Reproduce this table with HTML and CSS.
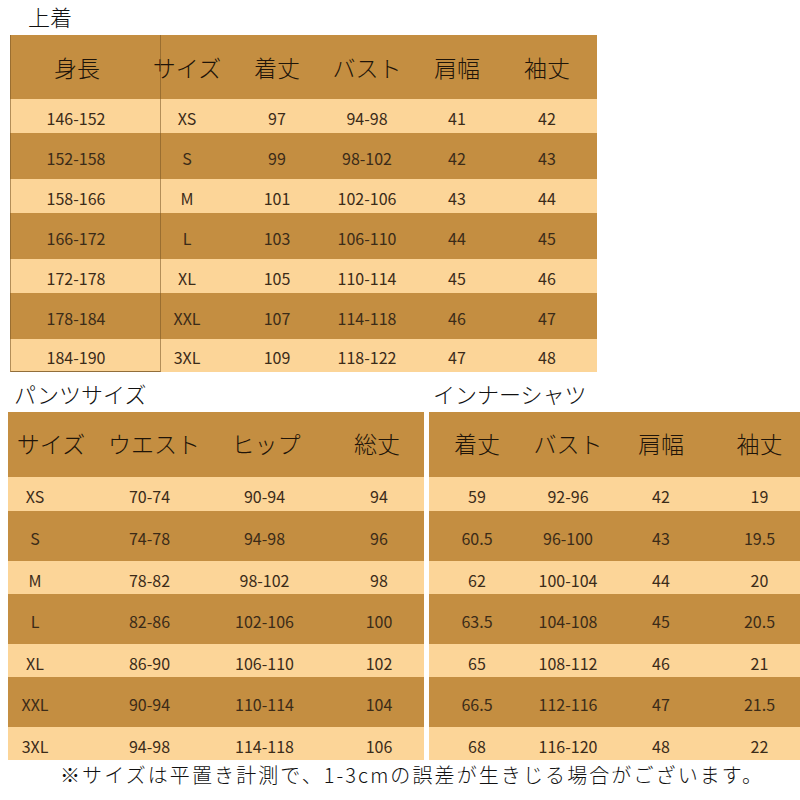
FILE: index.html
```html
<!DOCTYPE html>
<html lang="ja">
<head>
<meta charset="utf-8">
<link rel="stylesheet" href="styles.css">
</head>
<body>
<div class="page">
  <div class="title title-top">上着</div>
  <div class="tbl tbl-top">
    <div class="row head"><div class="c">身長</div><div class="c">サイズ</div><div class="c">着丈</div><div class="c">バスト</div><div class="c">肩幅</div><div class="c">袖丈</div></div>
    <div class="row l"><div class="c">146-152</div><div class="c">XS</div><div class="c">97</div><div class="c">94-98</div><div class="c">41</div><div class="c">42</div></div>
    <div class="row d"><div class="c">152-158</div><div class="c">S</div><div class="c">99</div><div class="c">98-102</div><div class="c">42</div><div class="c">43</div></div>
    <div class="row l"><div class="c">158-166</div><div class="c">M</div><div class="c">101</div><div class="c">102-106</div><div class="c">43</div><div class="c">44</div></div>
    <div class="row d"><div class="c">166-172</div><div class="c">L</div><div class="c">103</div><div class="c">106-110</div><div class="c">44</div><div class="c">45</div></div>
    <div class="row l"><div class="c">172-178</div><div class="c">XL</div><div class="c">105</div><div class="c">110-114</div><div class="c">45</div><div class="c">46</div></div>
    <div class="row d"><div class="c">178-184</div><div class="c">XXL</div><div class="c">107</div><div class="c">114-118</div><div class="c">46</div><div class="c">47</div></div>
    <div class="row l last"><div class="c">184-190</div><div class="c">3XL</div><div class="c">109</div><div class="c">118-122</div><div class="c">47</div><div class="c">48</div></div>
  </div>
  <div class="subtitles">
    <div class="title title-pants">パンツサイズ</div>
    <div class="title title-inner">インナーシャツ</div>
  </div>
  <div class="bottom">
    <div class="tbl tbl-pants">
      <div class="row head"><div class="c">サイズ</div><div class="c">ウエスト</div><div class="c">ヒップ</div><div class="c">総丈</div></div>
      <div class="row l"><div class="c">XS</div><div class="c">70-74</div><div class="c">90-94</div><div class="c">94</div></div>
      <div class="row d"><div class="c">S</div><div class="c">74-78</div><div class="c">94-98</div><div class="c">96</div></div>
      <div class="row l"><div class="c">M</div><div class="c">78-82</div><div class="c">98-102</div><div class="c">98</div></div>
      <div class="row d"><div class="c">L</div><div class="c">82-86</div><div class="c">102-106</div><div class="c">100</div></div>
      <div class="row l"><div class="c">XL</div><div class="c">86-90</div><div class="c">106-110</div><div class="c">102</div></div>
      <div class="row d"><div class="c">XXL</div><div class="c">90-94</div><div class="c">110-114</div><div class="c">104</div></div>
      <div class="row l last"><div class="c">3XL</div><div class="c">94-98</div><div class="c">114-118</div><div class="c">106</div></div>
    </div>
    <div class="tbl tbl-inner">
      <div class="row head"><div class="c">着丈</div><div class="c">バスト</div><div class="c">肩幅</div><div class="c">袖丈</div></div>
      <div class="row l"><div class="c">59</div><div class="c">92-96</div><div class="c">42</div><div class="c">19</div></div>
      <div class="row d"><div class="c">60.5</div><div class="c">96-100</div><div class="c">43</div><div class="c">19.5</div></div>
      <div class="row l"><div class="c">62</div><div class="c">100-104</div><div class="c">44</div><div class="c">20</div></div>
      <div class="row d"><div class="c">63.5</div><div class="c">104-108</div><div class="c">45</div><div class="c">20.5</div></div>
      <div class="row l"><div class="c">65</div><div class="c">108-112</div><div class="c">46</div><div class="c">21</div></div>
      <div class="row d"><div class="c">66.5</div><div class="c">112-116</div><div class="c">47</div><div class="c">21.5</div></div>
      <div class="row l last"><div class="c">68</div><div class="c">116-120</div><div class="c">48</div><div class="c">22</div></div>
    </div>
  </div>
  <div class="note">※サイズは平置き計測で、1-3cmの誤差が生きじる場合がございます。</div>
</div>
</body>
</html>
```
FILE: styles.css
```css
* { box-sizing: border-box; }
html, body { margin: 0; padding: 0; background: #ffffff; }
body {
  font-family: "Noto Sans CJK JP", "Noto Sans", sans-serif;
  color: #111;
}
.page {
  width: 800px;
  height: 800px;
  overflow: hidden;
  display: flex;
  flex-direction: column;
}
.title {
  font-size: 22px;
  line-height: 33px;
  color: #111;
  font-weight: 300;
}
.title-top {
  height: 35px;
  padding-left: 28px;
}
.tbl {
  position: relative;
  display: flex;
  flex-direction: column;
}
.row {
  display: grid;
  align-items: center;
  text-align: center;
}
.row .c {
  white-space: nowrap;
}
.head {
  background: #c48e41;
  font-size: 23px;
  font-weight: 300;
  color: #1e1409;
}
.row.l { background: #fcd598; }
.row.d { background: #c48e41; }
.row.l, .row.d {
  font-size: 16px;
  color: #3b2b18;
  padding-top: 4px;
}

/* top table */
.tbl-top {
  margin-left: 10px;
  width: 587px;
}
.tbl-top .row { grid-template-columns: 132px repeat(5, 90px) 1fr; }
.tbl-top .head { height: 64px; }
.tbl-top .row.l { height: 34px; }
.tbl-top .row.d { height: 46px; }
.tbl-top .row.last { height: 33px; }
.tbl-top::after {
  content: "";
  position: absolute;
  left: 0;
  top: 0;
  bottom: 0;
  width: 149px;
  border-left: 1px solid rgba(120, 85, 35, 0.55);
  border-right: 1px solid rgba(120, 85, 35, 0.55);
  border-bottom: 1px solid rgba(120, 85, 35, 0.8);
  pointer-events: none;
}
.tbl-top .head .c:first-child { padding-left: 2px; }

.subtitles {
  height: 41px;
  display: flex;
  align-items: center;
  padding-top: 3px;
}
.title-pants { width: 419px; padding-left: 14px; }
.title-inner { padding-left: 14px; }

.bottom {
  display: flex;
  gap: 5px;
  margin-left: 8px;
}
.tbl-pants { width: 416px; }
.tbl-inner { width: 371px; }
.bottom .head { height: 65px; padding-bottom: 4px; }
.bottom .row.l { height: 34px; }
.bottom .row.d { height: 50px; }
.bottom .row.l + .row.d + .row.l { height: 33px; }
.bottom .row.last { height: 32px; }

.tbl-pants .row { grid-template-columns: 84px 115px 115px 1fr; }
.tbl-pants .row .c:first-child { padding-right: 30px; }
.tbl-pants .row .c:last-child { padding-left: 12px; }
.tbl-pants .head { grid-template-columns: 86px 120px 104px 1fr; }
.tbl-pants .head .c:first-child { padding-right: 0; }
.tbl-pants .head .c:last-child { padding-left: 12px; }

.tbl-inner .row { grid-template-columns: 96px 86px 100px 1fr; }
.tbl-inner .row .c:last-child { padding-left: 8px; }

.note {
  height: 40px;
  font-size: 20px;
  line-height: 30px;
  letter-spacing: 2.1px;
  color: #111;
  font-weight: 300;
  text-align: center;
  padding-left: 24px;
}
```
